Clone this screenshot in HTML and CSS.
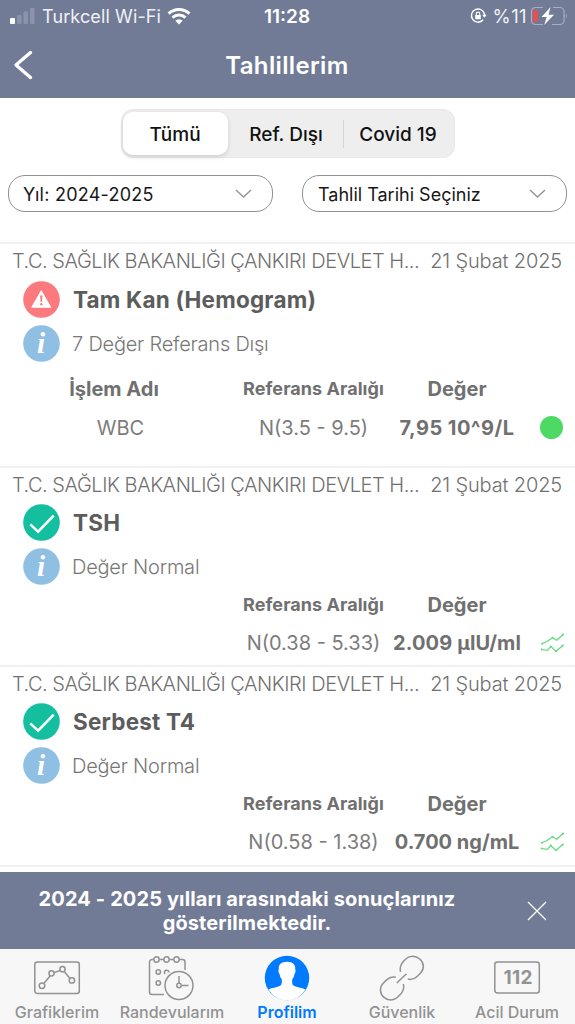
FILE: index.html
```html
<!DOCTYPE html>
<html lang="tr">
<head>
<meta charset="utf-8">
<title>Tahlillerim</title>
<link rel="stylesheet" href="styles.css">
</head>
<body>
<svg width="0" height="0" class="defs">
  <symbol id="info" viewBox="0 0 38 38"><circle cx="19" cy="19" r="18.800" fill="#8fbfe3"/><text x="18.500" y="28.500" text-anchor="middle" class="info-i">i</text></symbol>
  <symbol id="check" viewBox="0 0 38 38"><circle cx="19" cy="19" r="18.800" fill="#13bf9f"/><path d="M7.500 21l8 7.500L31.500 12" fill="none" stroke="#fff" stroke-width="2.600"/></symbol>
  <symbol id="warn" viewBox="0 0 38 38"><circle cx="19" cy="19" r="18.800" fill="#fc7a7d"/><path d="M18.700 10L28.500 27H9z" fill="#fff" stroke="#fff" stroke-linejoin="round"/><path d="M17.600 15h2.400l-.5 6.500h-1.400z" fill="#fc7a7d"/><circle cx="18.800" cy="23.800" r="1.200" fill="#fc7a7d"/></symbol>
  <symbol id="trend" viewBox="0 0 24 20"><path d="M2 10.700L7 8.500l5.500-3.800 4.300 2.600 6.200-5.800M1.500 16.500l6 .8 3.300-4 5.200 5.200 6.800-6" fill="none" stroke="#5fd97c" stroke-width="1.200"/><g fill="#5fd97c"><circle cx="2" cy="10.700" r="1"/><circle cx="12.500" cy="4.700" r=".9"/><circle cx="23" cy="1.500" r="1.100"/><circle cx="1.700" cy="16.400" r="1"/><circle cx="10.800" cy="13.500" r=".9"/><circle cx="16" cy="18.300" r="1"/><circle cx="22.800" cy="12.500" r="1.100"/></g></symbol>
</svg>
<div class="screen">
  <header class="top">
    <div class="status">
      <div class="status-left">
        <svg width="26" height="18" viewBox="0 0 26 18"><rect x="0" y="11" width="5" height="6" rx="1" fill="#fff"/><g fill="#8b93ab"><rect x="7" y="8" width="4.500" height="9" rx="1"/><rect x="13.500" y="4.500" width="4.500" height="12.500" rx="1"/><rect x="20" y="1" width="4.500" height="16" rx="1"/></g></svg>
        <span class="carrier">Turkcell Wi-Fi</span>
        <svg width="24" height="18" viewBox="0 0 24 18" fill="none" stroke="#fff" stroke-width="3"><path d="M1.600 6.600a15 15 0 0 1 20.800 0M5.500 10.700a9.400 9.400 0 0 1 13 0"/><path d="M12 17.500l-3.700-3.800a5.300 5.300 0 0 1 7.400 0z" fill="#fff" stroke="none"/></svg>
      </div>
      <span class="clock">11:28</span>
      <div class="status-right">
        <svg width="17" height="16" viewBox="0 0 17 16" fill="none" stroke="#fff" stroke-width="1.400"><path d="M13.100 11.800A6.600 6.600 0 1 1 14.600 7"/><path d="M12.100 6.800h4.600l-2.300 3z" fill="#fff" stroke="none"/><rect x="5.200" y="7" width="5.600" height="4.200" rx=".6" fill="#fff" stroke="none"/><path d="M6.300 7.200V5.800a1.700 1.700 0 0 1 3.400 0v1.400" stroke-width="1.100"/></svg>
        <span class="percent">%11</span>
        <svg width="37" height="20" viewBox="0 0 37 20"><path d="M13 1.500H5.500a4 4 0 0 0-4 4v9a4 4 0 0 0 4 4H13M23 1.500h7a4 4 0 0 1 4 4v9a4 4 0 0 1-4 4h-8" fill="none" stroke="#a9afc2" stroke-width="1.200"/><path d="M35.800 7.500c1.300 1 1.300 4 0 5z" fill="#a9afc2"/><rect x="3" y="4" width="4.500" height="12" rx="1.500" fill="#f24b4b"/><path d="M20.500 1L11.500 11h5.200l-2.500 8L24 8.800h-5.400z" fill="#fff"/></svg>
      </div>
    </div>
    <div class="nav">
      <svg width="20" height="30" viewBox="0 0 20 30"><path d="M17.500 2.500L3 15l14.500 12.500" fill="none" stroke="#fff" stroke-width="3.400" stroke-linecap="round" stroke-linejoin="round"/></svg>
      <h1>Tahlillerim</h1>
    </div>
  </header>
  <section class="filters">
    <div class="tabs">
      <div class="tab active"><span>Tümü</span></div>
      <div class="tab ref"><span>Ref. Dışı</span></div>
      <div class="tab covid"><span>Covid 19</span></div>
    </div>
    <div class="selects">
      <div class="select"><span class="year">Yıl: 2024-2025</span><svg width="17" height="10" viewBox="0 0 17 10"><path d="M1 1l7.500 7L16 1" fill="none" stroke="#929292" stroke-width="1.300"/></svg></div>
      <div class="select"><span class="date-sel">Tahlil Tarihi Seçiniz</span><svg width="17" height="10" viewBox="0 0 17 10"><path d="M1 1l7.500 7L16 1" fill="none" stroke="#929292" stroke-width="1.300"/></svg></div>
    </div>
  </section>
  <main>
    <article class="card first">
      <div class="org"><span class="org-name">T.C. SAĞLIK BAKANLIĞI ÇANKIRI DEVLET H...</span><span class="date">21 Şubat 2025</span></div>
      <div class="title"><svg class="badge"><use href="#warn"/></svg><h2 class="t-kan">Tam Kan (Hemogram)</h2></div>
      <div class="info"><svg class="badge"><use href="#info"/></svg><span>7 Değer Referans Dışı</span></div>
      <div class="cols heads"><b class="h-name">İşlem Adı</b><b class="h-ref">Referans Aralığı</b><b class="h-val">Değer</b></div>
      <div class="cols values"><span>WBC</span><span>N(3.5 - 9.5)</span><b class="wide">7,95 10^9/L</b><i class="dot"></i></div>
    </article>
    <article class="card">
      <div class="org"><span class="org-name">T.C. SAĞLIK BAKANLIĞI ÇANKIRI DEVLET H...</span><span class="date">21 Şubat 2025</span></div>
      <div class="title"><svg class="badge"><use href="#check"/></svg><h2>TSH</h2></div>
      <div class="info"><svg class="badge"><use href="#info"/></svg><span>Değer Normal</span></div>
      <div class="cols heads"><span></span><b class="h-ref">Referans Aralığı</b><b class="h-val">Değer</b></div>
      <div class="cols values"><span></span><span>N(0.38 - 5.33)</span><b class="mid">2.009 µlU/ml</b><svg width="24" height="20"><use href="#trend"/></svg></div>
    </article>
    <article class="card last">
      <div class="org"><span class="org-name">T.C. SAĞLIK BAKANLIĞI ÇANKIRI DEVLET H...</span><span class="date">21 Şubat 2025</span></div>
      <div class="title"><svg class="badge"><use href="#check"/></svg><h2>Serbest T4</h2></div>
      <div class="info"><svg class="badge"><use href="#info"/></svg><span>Değer Normal</span></div>
      <div class="cols heads"><span></span><b class="h-ref">Referans Aralığı</b><b class="h-val">Değer</b></div>
      <div class="cols values"><span></span><span>N(0.58 - 1.38)</span><b>0.700 ng/mL</b><svg width="24" height="20"><use href="#trend"/></svg></div>
    </article>
  </main>
  <aside class="notice">
    <p>2024 - 2025 yılları arasındaki sonuçlarınız<br>gösterilmektedir.</p>
    <svg width="20" height="20" viewBox="0 0 20 20"><path d="M1 1l18 18M19 1L1 19" stroke="#fff" stroke-width="1.300"/></svg>
  </aside>
  <nav class="bar">
    <a><svg width="48" height="46" viewBox="0 0 48 46" fill="none" stroke="#929292" stroke-width="1.500"><rect x="1.800" y="7" width="44.500" height="31.500" rx="2.500"/><path d="M10.800 28.500l6.700-8M20.800 17.800l6-2.200M31.200 16.600l6.200 7.400"/><circle cx="9" cy="30.700" r="2.800"/><circle cx="18.500" cy="18.300" r="2.600"/><circle cx="29.500" cy="14.200" r="2.600"/><circle cx="38.900" cy="25.400" r="2.700"/></svg><span>Grafiklerim</span></a>
    <a><svg width="48" height="46" viewBox="0 0 48 46" fill="none" stroke="#929292" stroke-width="1.500"><path d="M5.500 4.500H4a2.500 2.500 0 0 0-2.500 2.500v30A2.500 2.500 0 0 0 4 39.500h12M11.500 4.500h4M21.500 4.500h4M31.500 4.500h3A2.500 2.500 0 0 1 37 7v8"/><circle cx="8.500" cy="4.500" r="2.700"/><circle cx="18.500" cy="4.500" r="2.700"/><circle cx="28.500" cy="4.500" r="2.700"/><circle cx="10.300" cy="17" r="2.200"/><path d="M17 19a2.300 2.300 0 1 1 4-1.500"/><circle cx="10.300" cy="28" r="2.200"/><circle cx="31" cy="30.500" r="14"/><path d="M31 21v7.500M33.200 30.500h7.300"/><circle cx="31" cy="30.500" r="2.200"/></svg><span>Randevularım</span></a>
    <a class="on"><svg width="46" height="46" viewBox="0 0 46 46"><circle cx="23" cy="23" r="22.200" fill="#007aff"/><path d="M4.500 34.500C7 33 13 32.500 16.500 30.500c1.500-1 1.500-3.500 1.200-6.500-1.300-1.200-1.900-3-2.200-5.200-1-.6-1.500-3.600-.7-4.300C14.200 9.500 17 6.700 23 6.700s8.800 2.800 8.200 7.800c.8.700.3 3.700-.7 4.300-.3 2.200-.9 4-2.200 5.200-.3 3-.3 5.500 1.200 6.500 3.500 2 9.500 2.500 12 4a21.300 21.300 0 0 1-37 0z" fill="#fff"/></svg><span>Profilim</span></a>
    <a><svg width="46" height="46" viewBox="0 0 46 46" fill="none" stroke="#929292" stroke-width="1.500"><path d="M21.500 17c-1-4 .2-7.500 3-10.700l2.300-2.300c3.800-3.600 10-3.600 14 0 4.600 4 4.600 10 .8 14l-3.500 3.500c-2.500 2.500-6 3.400-9.300 2.600M16.800 22.200c-3.200-.8-6.700.2-9.200 2.700L4.200 28.300c-3.800 4-3.600 10.200.5 13.800 4 3.800 10 3.800 13.800.2l3-3c2.700-2.900 3.900-6.500 2.800-10.300M17.800 28l9.700-9.300"/></svg><span>Güvenlik</span></a>
    <a><svg width="48" height="46" viewBox="0 0 48 46"><rect x="1.800" y="7" width="44.500" height="31" rx="2.500" fill="none" stroke="#929292" stroke-width="1.500"/><text x="25" y="29" text-anchor="middle" class="num" textLength="29">112</text></svg><span>Acil Durum</span></a>
  </nav>
</div>
</body>
</html>
```
FILE: styles.css
```css
* { box-sizing: border-box; }
body { margin: 0; background: #fff; font-family: Inter, "Liberation Sans", sans-serif; }
svg { display: block; flex: none; overflow: visible; }
.defs { position: absolute; }
h1, h2, p { margin: 0; }
.screen { width: 575px; height: 1024px; overflow: hidden; display: flex; flex-direction: column; white-space: nowrap; }
.top { height: 98px; flex: none; background: #727b96; color: #fff; }
.status { height: 32px; display: grid; grid-template-columns: 1fr auto 1fr; align-items: center; padding: 0 8px 0 10px; }
.status-left { display: flex; align-items: center; gap: 6px; }
.status-right { display: flex; align-items: center; justify-content: flex-end; gap: 6px; }
.carrier { font-size: 18px; letter-spacing: 0.12px; color: #f0f1f5; width: 119px; }
.clock { font-size: 19px; font-weight: 600; margin-right: 3px; }
.percent { font-size: 18.5px; letter-spacing: 0.4px; color: #f0f1f5; }
.status-right .percent + svg { margin-left: -3px; }
.nav { height: 66px; display: grid; grid-template-columns: 50px 1fr 50px; align-items: center; padding: 0 14px 0 13px; }
.nav h1 { font-size: 24px; font-weight: 600; letter-spacing: 0.35px; text-align: center; }
.filters { height: 144px; padding-top: 11px; flex: none; }
.tabs { width: 334px; height: 49px; margin: 0 auto; display: grid; grid-template-columns: 108px 113px 111px; background: #eeeeef; border: 1px solid #e9e9ea; border-radius: 12px; font-size: 19px; font-weight: 500; color: #111; }
.tab { display: flex; align-items: center; justify-content: center; padding-top: 1px; }
.active { margin: 2px 2px 2px 1px; background: #fff; border-radius: 10px; box-shadow: 0 2px 5px #0002; }
.covid { background: linear-gradient(#d5d5d7, #d5d5d7) 0 50% / 1px 28px no-repeat; }
.selects { display: flex; justify-content: space-between; padding: 17px 8px 0; }
.select { width: 265px; height: 37px; border: 1px solid #909095; border-radius: 17px; display: flex; align-items: center; justify-content: space-between; padding: 1px 20px 0 15px; font-size: 18px; color: #171717; }
.year { letter-spacing: 0.25px; margin-left: -1px; }
.card { border-top: 2px solid #f1f1f1; height: 199px; color: #777; }
.card.first { height: 224px; }
.card.last { height: 202px; border-bottom: 2px solid #f1f1f1; }
.org { height: 35px; display: flex; align-items: center; justify-content: space-between; padding: 0 13px 2px 12px; font-size: 20px; font-weight: 300; color: #707070; }
.first .org { height: 36px; }
.org-name { letter-spacing: -0.46px; }
.date { letter-spacing: -0.15px; }
.title, .info { display: flex; align-items: center; gap: 12px; padding-left: 23px; }
.title { height: 39px; }
.info { height: 49px; font-size: 20px; font-weight: 300; letter-spacing: -0.22px; color: #777; }
.title h2 { font-size: 22.5px; font-weight: 700; letter-spacing: 0.2px; color: #5c5c5c; padding-left: 1px; }
.badge { width: 37px; height: 37px; }
.info-i { font: italic bold 30px "Liberation Serif", serif; fill: #fff; }
.cols { display: grid; grid-template-columns: 241px 145px 142px 47px; align-items: center; justify-items: center; }
.heads { height: 27px; color: #707070; }
.first .heads { height: 41px; }
.values { height: 49px; font-size: 20px; }
.first .values { height: 37px; }
.values span { font-weight: 400; color: #7c7c7c; }
.values b { font-weight: 700; color: #707070; }
.cols b { font-weight: 700; }
.wide { letter-spacing: 0.45px; }
.mid { letter-spacing: 0.15px; }
.h-name { font-size: 20px; padding-right: 13px; }
.h-ref { font-size: 18px; letter-spacing: 0.06px; }
.h-val { font-size: 20px; }
.dot { width: 23px; height: 23px; border-radius: 50%; background: #4cd964; }
.notice { height: 77px; margin-top: 5px; flex: none; background: #727b96; color: #fff; display: grid; grid-template-columns: 494px 1fr; align-items: center; }
.notice p { text-align: center; font-size: 20px; line-height: 24px; font-weight: 700; letter-spacing: 0.12px; }
.notice svg { margin-left: 33px; }
.bar { flex: 1; background: #f7f7f8; display: grid; grid-template-columns: repeat(5, 115px); color: #929292; font-size: 16px; font-weight: 500; }
.bar a { display: flex; flex-direction: column; align-items: center; padding: 6px 1px 0 0; gap: 1px; }
.bar svg { margin-right: 1px; }
.bar .on { color: #007aff; font-weight: 600; }
.num { font: bold 19px Inter, sans-serif; fill: #929292; }
```
